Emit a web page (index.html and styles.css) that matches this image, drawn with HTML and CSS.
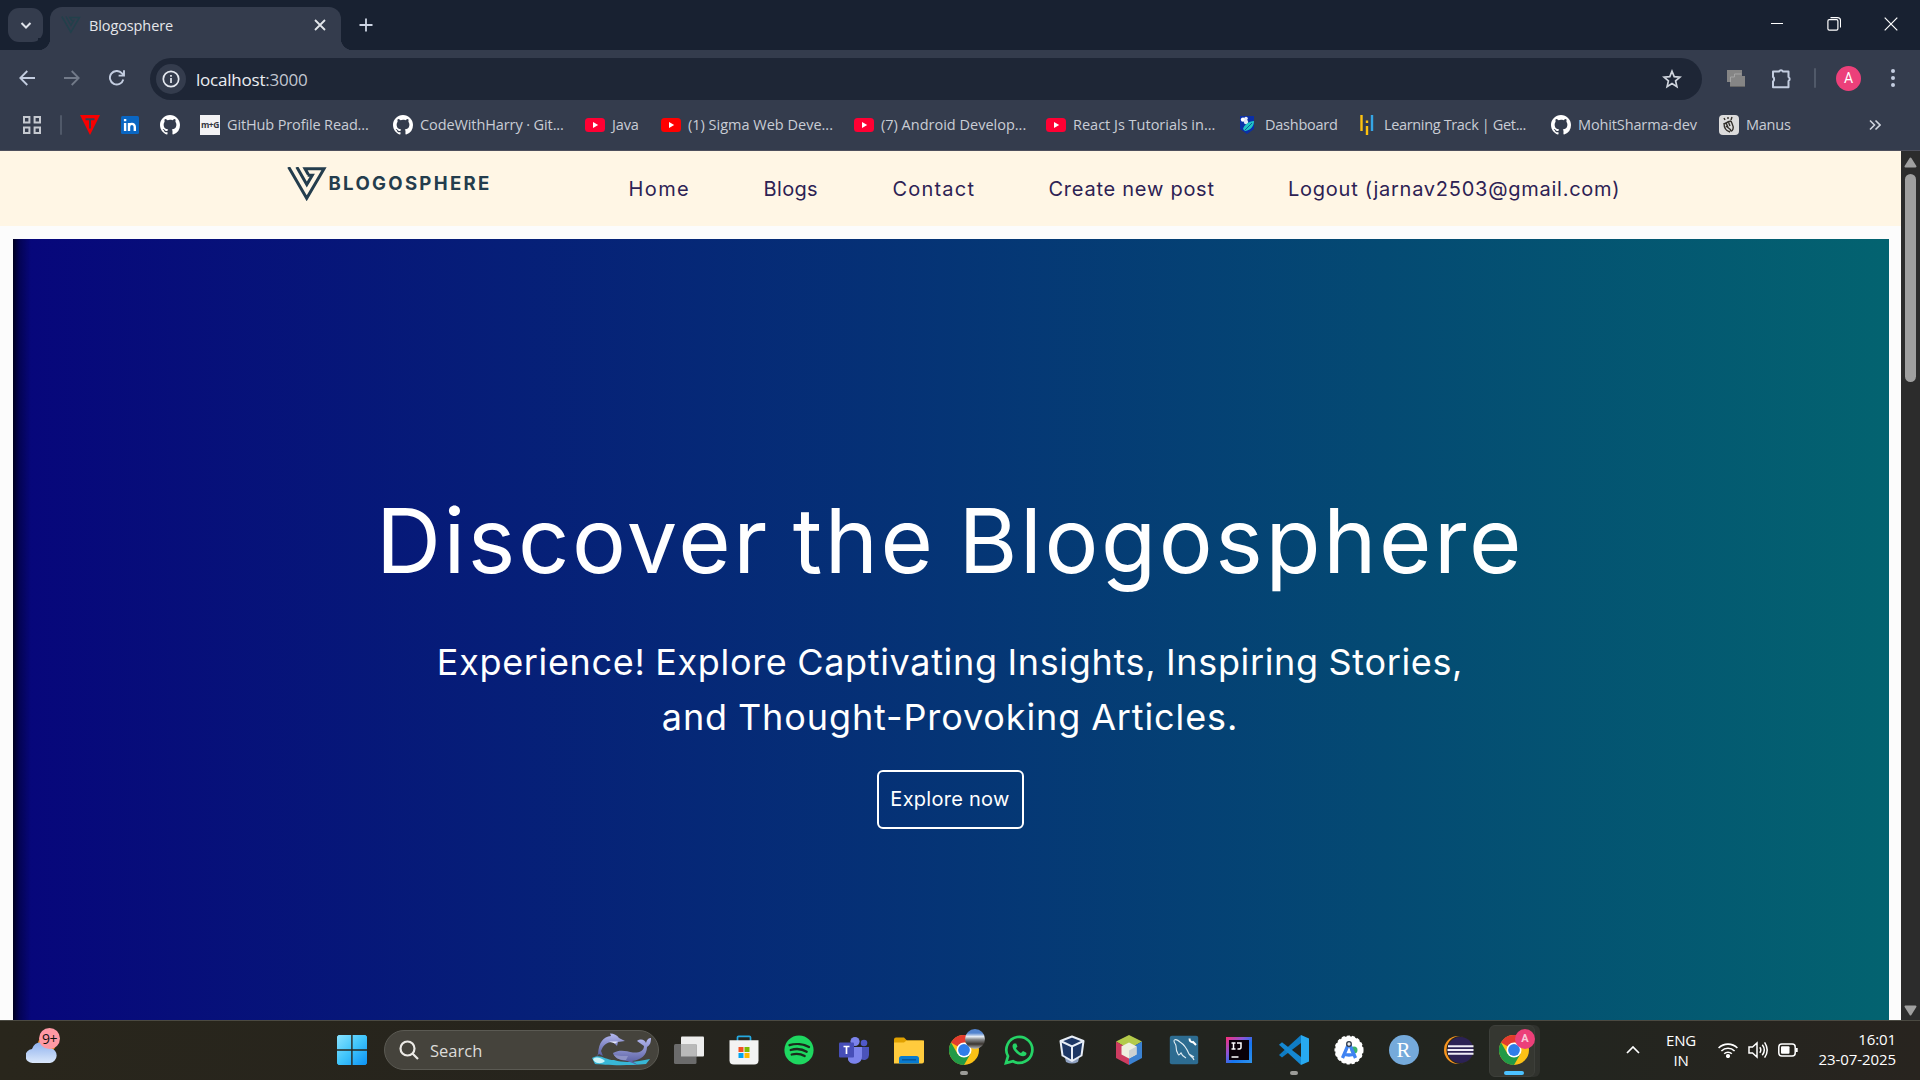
FILE: index.html
```html
<!DOCTYPE html>
<html lang="en">
<head>
<meta charset="utf-8">
<title>Blogosphere</title>
<link rel="stylesheet" href="styles.css">
</head>
<body>
<svg class="defs" width="0" height="0">
  <symbol id="github" viewBox="0 0 16 16"><path d="M8 0C3.58 0 0 3.58 0 8c0 3.54 2.29 6.53 5.47 7.59.4.07.55-.17.55-.38 0-.19-.01-.82-.01-1.49-2.01.37-2.53-.49-2.69-.94-.09-.23-.48-.94-.82-1.13-.28-.15-.68-.52-.01-.53.63-.01 1.08.58 1.23.82.72 1.21 1.87.87 2.33.66.07-.52.28-.87.51-1.07-1.78-.2-3.64-.89-3.64-3.95 0-.87.31-1.59.82-2.15-.08-.2-.36-1.02.08-2.12 0 0 .67-.21 2.2.82A7.6 7.6 0 0 1 8 3.87c.68 0 1.36.09 2 .26 1.53-1.04 2.2-.82 2.2-.82.44 1.1.16 1.92.08 2.12.51.56.82 1.27.82 2.15 0 3.07-1.87 3.75-3.65 3.95.29.25.54.73.54 1.48 0 1.07-.01 1.93-.01 2.2 0 .21.15.46.55.38A8 8 0 0 0 16 8c0-4.42-3.58-8-8-8z" fill="#fff"/></symbol>
  <symbol id="youtube" viewBox="0 0 20 20"><rect y="3" width="20" height="14" rx="3.5" fill="currentColor"/><path d="M8 7l5.2 3L8 13z" fill="#fff"/></symbol>
  <symbol id="vmark" viewBox="0 0 40 34"><path d="M1.6 0L19.7 31.3L37 1.8H18L21.3 7.6M9.8 0L19.8 17.6L25.3 8.2H20.6" fill="none" stroke="currentColor" stroke-width="3"/></symbol>
  <symbol id="chrome" viewBox="0 0 30 30"><circle cx="15" cy="15" r="15" fill="#fbc116"/><path d="M15 15L2 7.5A15 15 0 0 1 28 7.5H15z" fill="#e33b2e"/><path d="M2 7.5A15 15 0 0 0 15 30L21.5 18.7L8.5 18.7z" fill="#219a47"/><circle cx="15" cy="15" r="7.5" fill="#fff"/><circle cx="15" cy="15" r="5.9" fill="#2f7de9"/></symbol>
</svg>

<header class="browser">
  <div class="tabstrip">
    <button class="tab-search"><svg width="12" height="12" viewBox="0 0 12 12"><path d="M1.5 4L6 8.5L10.5 4" fill="none" stroke="#dfe3ea" stroke-width="2"/></svg></button>
    <div class="tab">
      <svg class="favicon" width="20" height="20"><use href="#vmark"/></svg>
      <span class="tab-title">Blogosphere</span>
      <svg width="12" height="12" viewBox="0 0 12 12"><path d="M1 1l10 10M11 1L1 11" stroke="#e3e6eb" stroke-width="1.8"/></svg>
    </div>
    <svg class="newtab" width="14" height="14" viewBox="0 0 14 14"><path d="M7 .5v13M.5 7h13" stroke="#cdd5e4" stroke-width="1.8"/></svg>
    <div class="window-controls">
      <svg width="14" height="14" viewBox="0 0 14 14"><path d="M1 6.5h12" stroke="#fff"/></svg>
      <svg width="14" height="14" viewBox="0 0 14 14" fill="none" stroke="#fff"><rect x=".9" y="2.6" width="10" height="10.5" rx="1.4" stroke-width="1.2"/><path d="M3.5 .6h7a3 3 0 0 1 3 3v7" stroke-width="1.1"/></svg>
      <svg width="14" height="14" viewBox="0 0 14 14"><path d="M.7 .7l12.6 12.6M13.3 .7L.7 13.3" stroke="#fff" stroke-width="1.2"/></svg>
    </div>
  </div>

  <div class="toolbar">
    <svg width="16" height="16" viewBox="0 0 16 16" fill="none" stroke="#c3cde0" stroke-width="1.8"><path d="M16 8H1.5M8.3 1L1.3 8l7 7"/></svg>
    <svg width="16" height="16" viewBox="0 0 16 16" fill="none" stroke="#727a89" stroke-width="1.8"><path d="M0 8h14.5M7.7 1l7 7l-7 7"/></svg>
    <svg width="16" height="16" viewBox="0 0 16 16" fill="none" stroke="#c3cde0" stroke-width="1.9"><path d="M14.3 9.5A6.8 6.8 0 1 1 12.8 3.2L14.5 5M15 .3V5.6H9.6"/></svg>
    <div class="omnibox">
      <span class="site-info"><svg width="18" height="18" viewBox="0 0 18 18" fill="none" stroke="#e4e8ef"><circle cx="9" cy="9" r="7.7" stroke-width="1.7"/><path d="M9 8v5M9 5v1.8" stroke-width="1.7"/></svg></span>
      <span class="url">localhost<i>:3000</i></span>
      <svg width="20" height="20" viewBox="0 0 20 20" fill="none" stroke="#d0d5de" stroke-width="1.7"><path d="M10 2.2l2.2 5.4 5.8.5-4.4 3.8 1.3 5.7L10 14.6l-4.9 3 1.3-5.7L2 8.1l5.8-.5z"/></svg>
    </div>
    <svg class="ext" width="20" height="18" viewBox="0 0 20 18"><path d="M1 1h15v6h3v10H4v-4H1z" fill="#858585"/><path d="M4.5 13V8h4V5h7" fill="none" stroke="#a4a4a4"/><path d="M4 17.5h15" stroke="#666"/></svg>
    <svg width="22" height="22" viewBox="0 0 22 22"><path d="M2 4.500h6a2.300 2.300 0 0 1 4 0H17.500v5.500a2.300 2.300 0 0 1 0 4v6.200H2v-5.700a2.900 2.900 0 0 0 0-4.600z" fill="none" stroke="#c3cde0" stroke-width="2" stroke-linejoin="round"/></svg>
    <span class="divider"></span>
    <span class="avatar">A</span>
    <svg class="menu" width="6" height="20" viewBox="0 0 6 20" fill="#c3cde0"><circle cx="3" cy="3" r="2"/><circle cx="3" cy="10" r="2"/><circle cx="3" cy="17" r="2"/></svg>
  </div>

  <div class="bookmarks">
    <svg width="20" height="20" viewBox="0 0 20 20" fill="none" stroke="#c5c9d0" stroke-width="2"><path d="M2 2h5.4v5.4H2zM12.6 2H18v5.4h-5.4zM2 12.600h5.400V18H2zM12.600 12.600H18V18h-5.400z"/></svg>
    <span class="divider"></span>
    <svg width="20" height="20" viewBox="0 0 20 20"><path d="M0 0h20L10 20z" fill="#f80000"/><path d="M5.500 4.200h9M10 4v9.500" stroke="#384050" stroke-width="2"/></svg>
    <svg width="18" height="18" viewBox="0 0 18 18"><rect width="18" height="18" rx="1.5" fill="#0a66c2"/><path d="M4.1 7v8M4.1 3v2.3M8 15V7M8 11c0-4 5.8-4.3 5.8 0v4" fill="none" stroke="#fff" stroke-width="2.4"/></svg>
    <svg width="20" height="20"><use href="#github"/></svg>
    <a class="bm"><span class="mg">m+G</span><span class="ls-13">GitHub Profile Read...</span></a>
    <a class="bm"><svg><use href="#github"/></svg><span class="ls-10">CodeWithHarry · Git...</span></a>
    <a class="bm yt"><svg><use href="#youtube"/></svg><span class="ls-13">Java</span></a>
    <a class="bm yt red"><svg><use href="#youtube"/></svg><span>(1) Sigma Web Deve...</span></a>
    <a class="bm yt"><svg><use href="#youtube"/></svg><span>(7) Android Develop...</span></a>
    <a class="bm yt"><svg><use href="#youtube"/></svg><span>React Js Tutorials in...</span></a>
    <a class="bm"><svg viewBox="0 0 20 20"><path d="M2 1h14v13l-7 5l-7-5z" fill="#0b2fa6"/><circle cx="5" cy="4.600" r="2.200" fill="#fff"/><circle cx="8" cy="3.500" r="1.800" fill="#e8edf8"/><circle cx="8" cy="7" r="2.200" fill="#dfe6f8"/><path d="M5 14C6 10 11 6 16 6C16 11 13 15 7 16z" fill="#20c3c6"/><path d="M7 15l7-7" stroke="#0b5a9c"/></svg><span class="ls-24">Dashboard</span></a>
    <a class="bm"><svg viewBox="0 0 20 20" stroke-width="2.4"><path d="M4.5 0v16M10 11v9M10 5.5v2.400" stroke="#ffc20e"/><path d="M15 0v16" stroke="#35a5e5"/></svg><span class="ls-35">Learning Track | Get...</span></a>
    <a class="bm"><svg><use href="#github"/></svg><span class="ls-13">MohitSharma-dev</span></a>
    <a class="bm"><svg viewBox="0 0 20 20"><rect width="20" height="20" rx="4" fill="#dcdcdc"/><path d="M5 8c0 4 2 8 6 9M7 8l2 4M9 6l2 5M12 6c1 3 3 5 2 8s-2 2-3 1M5 3l1 2M9 2v2M13 2l-1 3M5 9l4-2l3-1M7 11l5 4" fill="none" stroke="#33302b" stroke-width="1.400"/></svg><span class="ls-24">Manus</span></a>
    <svg class="more" width="12" height="12" viewBox="0 0 12 12" fill="none" stroke="#d0d5de" stroke-width="1.600"><path d="M1 1.500L5.500 6L1 10.500M6.500 1.500L11 6l-4.500 4.500"/></svg>
  </div>
</header>

<main class="viewport">
  <div class="page">
    <nav class="site-nav">
      <a class="logo"><svg width="40" height="34"><use href="#vmark"/></svg><span>BLOGOSPHERE</span></a>
      <a class="home">Home</a>
      <a class="blogs">Blogs</a>
      <a class="contact">Contact</a>
      <a>Create new post</a>
      <a>Logout (jarnav2503@gmail.com)</a>
    </nav>
    <section class="hero">
      <h1>Discover the Blogosphere</h1>
      <p><span>Experience! Explore Captivating Insights, Inspiring Stories,</span><br><span class="second">and Thought-Provoking Articles.</span></p>
      <button class="explore">Explore now</button>
    </section>
  </div>
  <div class="scrollbar">
    <svg width="13" height="11" viewBox="0 0 13 11"><path d="M6.500 1.500L11.500 9.500H1.500z" fill="#a0a0a0" stroke="#a0a0a0" stroke-width="2" stroke-linejoin="round"/></svg>
    <span class="thumb"></span>
    <svg width="13" height="11" viewBox="0 0 13 11"><path d="M6.500 9.500L11.500 1.500H1.500z" fill="#a0a0a0" stroke="#a0a0a0" stroke-width="2" stroke-linejoin="round"/></svg>
  </div>
</main>

<footer class="taskbar">
  <div class="weather">
    <svg width="36" height="38" viewBox="0 0 36 38"><defs><linearGradient id="cl" x2="0" y2="1"><stop stop-color="#8fb2ee"/><stop offset="1" stop-color="#dbe8fb"/></linearGradient></defs><circle cx="21" cy="17" r="9" fill="#f08a1c"/><path d="M7 36a7 7 0 0 1-1-14A10 10 0 0 1 24.500 21A7.600 7.600 0 0 1 24 36z" fill="url(#cl)"/></svg>
    <span class="badge">9+</span>
  </div>
  <svg class="start" width="30" height="30" viewBox="0 0 30 30"><defs><linearGradient id="win" x2="1" y2="1"><stop stop-color="#8ae3ff"/><stop offset=".5" stop-color="#3fc4fb"/><stop offset="1" stop-color="#0c92f5"/></linearGradient></defs><path d="M1.500 0H14.200V14.200H0V1.500zM15.600 0H28.500L30 1.500V14.200H15.600zM0 15.700H14.200V30H1.500L0 28.500zM15.600 15.700H30V28.500L28.500 30H15.600z" fill="url(#win)"/></svg>
  <div class="search">
    <svg width="20" height="20" viewBox="0 0 20 20" fill="none" stroke="#eceae6" stroke-width="2.200"><circle cx="8.500" cy="8.500" r="7"/><path d="M13.500 13.500l5.500 5.500"/></svg>
    <span>Search</span>
    <svg width="60" height="34" viewBox="0 0 60 34"><defs><linearGradient id="wh" x2="0" y2="1"><stop stop-color="#b4b8ef"/><stop offset="1" stop-color="#51579b"/></linearGradient></defs><path d="M1 25C9 20 14 27 23 27C36 31 48 28 59 26L55 31C35 33 12 32 4 31z" fill="#38b7d6"/><path d="M2 26c4-3 8-1 12 2c-3 3-8 3-11 0z" fill="#c9f3f8"/><path d="M7 21C8 9 12 4 20 3L19 .5C23 .5 26 2 28 5L34 8L27 9L26 13L22 9C16 9 12 12 10 18L12 23L8 21L5 24z" fill="url(#wh)"/><path d="M18 8.500l9 0l-3 2z" fill="#e5e8fb"/><path d="M22 20C29 16 35 18 42 19.500C48 20 53 18 53 13L46 8C50 5 54 7 55 10C56 6 58 5 60 5C60 10 59 12 56 14C56 22 50 27 41 28L47 32L36 28C27 27 23 24 22 20z" fill="url(#wh)"/><path d="M23 22c5 1 9 1 14 1l-2 4c-7 0-10-2-12-5z" fill="#8d92c6"/></svg>
  </div>
  <div class="apps">
    <span class="app"><svg viewBox="0 0 30 30"><rect x="7" y="1.500" width="23" height="20" rx="1" fill="#ededed"/><rect y="9" width="22.500" height="20" rx="1.500" fill="#6b6b6b"/><path d="M7 9h15.500v12.500H7z" fill="#b9b9b9"/></svg></span>
    <span class="app"><svg viewBox="0 0 30 30"><path d="M8.500 6V2.500q0-1.200 1.200-1.200h10.600q1.200 0 1.200 1.200V6" fill="none" stroke="#25a9e0" stroke-width="1.700"/><path d="M.5 5.200h29v20q0 4.300-4.300 4.300H4.800Q.5 29.500.5 25.200z" fill="#f3f3f3"/><path d="M9.500 12h5v5h-5z" fill="#f25022"/><path d="M15.500 12h5v5h-5z" fill="#7fba00"/><path d="M9.500 18h5v5h-5z" fill="#00a4ef"/><path d="M15.500 18h5v5h-5z" fill="#ffb900"/></svg></span>
    <span class="app"><svg viewBox="0 0 30 30"><circle cx="15" cy="15" r="14.600" fill="#1ed760"/><path d="M5.500 10.200c6-2 14-1.300 19.500 1.800M6.700 15c5-1.500 11.500-1 16 1.700M7.700 19.500c4.500-1.200 9-.8 13 1.500" fill="none" stroke="#1b2a1d" stroke-width="2.300" stroke-linecap="round"/></svg></span>
    <span class="app"><svg viewBox="0 0 30 30"><circle cx="25" cy="8" r="3.300" fill="#5059c9"/><circle cx="16" cy="6.500" r="4.600" fill="#7b83eb"/><path d="M20 12h10v8a5 5 0 0 1-8 4z" fill="#4b53bc"/><path d="M9 12h14v9a7.500 7.500 0 0 1-14 4z" fill="#7b83eb"/><rect y="7.500" width="15" height="15" rx="1" fill="#464eb8"/><path d="M4.500 11.500h6M7.500 11.500v7.500" stroke="#fff" stroke-width="1.700"/></svg></span>
    <span class="app"><svg viewBox="0 0 30 30"><path d="M0 4.500q0-2 2-2h8l3 3h15q2 0 2 2V12H0z" fill="#e0a100"/><path d="M0 7.500h10l2.500-2H30v21q0 2-2 2H0z" fill="#ffcb3d"/><path d="M5 28.500v-5q0-2.500 2.500-2.500h15q2.500 0 2.500 2.500v5z" fill="#087bd0"/><path d="M8 24.800h14" stroke="#064f8c" stroke-width="1.200"/></svg></span>
    <span class="app running"><svg><use href="#chrome"/></svg><span class="profile photo"></span></span>
    <span class="app"><svg viewBox="0 0 30 30"><path d="M2 28l2-6.800A13 13 0 1 1 9 26.200z" fill="none" stroke="#25d366" stroke-width="2.700"/><path d="M10 8.500c-3 2-1 6 2 9s7 5 9.500 3c1.500-1.500 1-2.500.5-3l-3-1.500-2 2c-2-.7-4-2.700-5-4.700l1.500-1.800-1.300-3z" fill="#25d366"/></svg></span>
    <span class="app vbox"><svg viewBox="0 0 30 30"><path d="M8 23h14l-1 4q-6 3-12 0z" fill="#8ea0c0"/><path d="M15 1.500l11.500 4.500-2 14.500L15 26l-9.500-5.500L3.500 6z" fill="#1d3765" stroke="#e8eef7" stroke-width="2" stroke-linejoin="round"/><path d="M3.500 6L15 11.500L26.500 6M15 11.500V26" fill="none" stroke="#e8eef7" stroke-width="2"/></svg></span>
    <span class="app"><svg viewBox="0 0 30 30"><path d="M15 0l13 6.500L15 14L2 6.500z" fill="#b3ca4a"/><path d="M2 6.500L15 14v16L2 23z" fill="#cd3c60"/><path d="M28 6.500L15 14v16l13-7z" fill="#3b82d2"/><path d="M15 7.500l7.500 3.800v8.200L15 23.500l-7.500-4v-8.200z" fill="#eeefdf"/><path d="M15 15.500l7.500-4v8L15 23.500z" fill="#ccd2d2"/></svg></span>
    <span class="app"><svg viewBox="0 0 30 30"><rect x=".8" y=".8" width="28.400" height="28.400" rx="2" fill="#2d6c91"/><path d="M25 25c-1-3-4-4-5-6c-2-5-4-9-9-12C8 4 5 4 5 6c0 2 2 3 2 5s0 5 2 8c1 2 2 0 3-1c1 3 3 4 5 5M20 19l5 3" fill="none" stroke="#e1edf3" stroke-width="1.100"/><path d="M20.500 3.500c0 3 2 4 3.500 3.500L27 10" fill="none" stroke="#fff" stroke-width="2"/></svg></span>
    <span class="app"><svg viewBox="0 0 30 30"><defs><linearGradient id="ij" x2="1" y2="1"><stop stop-color="#fe2d76"/><stop offset=".35" stop-color="#8a55d8"/><stop offset=".6" stop-color="#1476f2"/><stop offset="1" stop-color="#3094e8"/></linearGradient></defs><rect x="2" y="2" width="26" height="26" fill="url(#ij)"/><rect x="5" y="5" width="20" height="20" fill="#090108"/><path d="M7.500 8h4M9.500 8v6M7.500 14h4M13 8h4v4.500q0 1.800-3.500 1.500M7.500 22h7" fill="none" stroke="#fff" stroke-width="1.500"/></svg></span>
    <span class="app running"><svg viewBox="0 0 30 30"><path d="M22 0L22 8L3 22.500L0 20z" fill="#0f7cc4"/><path d="M22 30L22 22L3 7.300L0 9.800z" fill="#1588d2"/><path d="M22 0l8 3.500v23L22 30z" fill="#27a9f1"/></svg></span>
    <span class="app"><svg viewBox="0 0 30 30"><circle cx="15" cy="15" r="13.800" fill="#fff" stroke="#fff" stroke-width="1.500" stroke-dasharray="3.200 2"/><circle cx="20" cy="15" r="3.500" fill="#3bb36b"/><path d="M15 8l-6.500 15M15 8l6.500 15M9 18.500q6 3 12 0" fill="none" stroke="#3f83f2" stroke-width="3.300"/><circle cx="15" cy="9" r="2.300" fill="#eee" stroke="#2e3948" stroke-width="1.300"/></svg></span>
    <span class="app rstudio">R</span>
    <span class="app"><svg viewBox="0 0 30 30"><circle cx="14" cy="15" r="14" fill="#f7941e"/><circle cx="16.500" cy="15" r="14" fill="#26261f"/><circle cx="16.500" cy="15" r="13" fill="#2c2255"/><path d="M4 11.200h25.500M3.500 15h26M4 18.800h25.500" stroke="#efedf6" stroke-width="1.900"/></svg></span>
    <span class="app active"><svg><use href="#chrome"/></svg><span class="profile">A</span></span>
  </div>
  <div class="tray">
    <svg width="14" height="8" viewBox="0 0 14 8"><path d="M1 7l6-6l6 6" fill="none" stroke="#fff" stroke-width="1.700"/></svg>
    <span class="lang">ENG<br>IN</span>
    <svg class="wifi" width="20" height="16" viewBox="0 0 20 16" fill="none" stroke="#fff" stroke-width="1.600"><path d="M.6 6a13.300 13.300 0 0 1 18.800 0M3.400 9a9.400 9.400 0 0 1 13.200 0M6.200 11.800a5.400 5.400 0 0 1 7.600 0"/><circle cx="10" cy="14" r="1.300" fill="#fff"/></svg>
    <svg width="20" height="18" viewBox="0 0 20 18" fill="none" stroke="#fff" stroke-width="1.500"><path d="M1 6h3.500L9 2v14l-4.500-4H1zM11.800 6.200q2 2.800 0 5.600M14.300 3.800q4 5.200 0 10.400M16.600 1.300q5.200 7.700 0 15.400"/></svg>
    <svg class="battery" width="20" height="14" viewBox="0 0 20 14"><rect x=".8" y="1" width="16.400" height="12" rx="3" fill="none" stroke="#fff" stroke-width="1.500"/><rect x="3" y="3.200" width="8.500" height="7.600" rx="1" fill="#fff"/><path d="M18.700 5v4" stroke="#fff" stroke-width="2"/></svg>
    <span class="clock">16:01<br>23-07-2025</span>
  </div>
</footer>
</body>
</html>
```
FILE: styles.css
```css
* { box-sizing: border-box; }
body { margin: 0; width: 1920px; height: 1080px; overflow: hidden; display: flex; flex-direction: column; font-family: "Open Sans", sans-serif; background: #fcfcfc; }
button { font: inherit; padding: 0; border: 0; }
svg { display: block; flex: none; }
.defs { position: absolute; }

/* browser frame */
.browser { height: 151px; background: #343c4d; border-bottom: 1px solid #4d4f5c; flex: none; }
.tabstrip { height: 50px; background: #182131; display: flex; align-items: flex-start; padding: 7px 12px 0 8px; }
.tab-search { width: 35px; height: 34px; margin: 1px 7px 0 0; border-radius: 11px; background: #343c4d; display: grid; place-items: center; }
.tab { position: relative; width: 291px; height: 43px; border-radius: 12px 12px 0 0; background: #343c4d; display: flex; align-items: center; padding: 0 15px 7px 11px; }
.tab::before, .tab::after { content: ""; position: absolute; bottom: 0; width: 12px; height: 12px; }
.tab::before { left: -12px; background: radial-gradient(circle at 0 0, #182131 12px, #343c4d 12.5px); }
.tab::after { right: -12px; background: radial-gradient(circle at 100% 0, #182131 12px, #343c4d 12.5px); }
.favicon { color: #22404b; }
.tab-title { flex: 1; padding-left: 8px; color: #e4e6ea; font-size: 14.5px; letter-spacing: -.11px; }
.newtab { margin: 11px 0 0 18px; }
.window-controls { margin-left: auto; padding: 10px 10px 0 0; display: flex; gap: 43px; }

.toolbar { height: 56px; display: flex; align-items: center; padding: 0 24px 0 19px; }
.toolbar > svg:nth-child(-n+2) { margin-right: 29px; }
.omnibox { flex: none; width: 1552px; height: 42px; margin: 2px 24px 0 25px; border-radius: 21px; background: #1e2636; display: flex; align-items: center; padding: 0 20px 0 6px; }
.site-info { width: 30px; height: 30px; border-radius: 50%; background: #343c4d; display: grid; place-items: center; }
.url { flex: 1; padding-left: 10px; color: #eceef2; font-size: 17px; letter-spacing: -.22px; }
.url i { font-style: normal; color: #c2c7d1; }
.ext { margin-right: 25px; }
.divider { width: 2px; height: 20px; border-radius: 1px; background: #505969; }
.toolbar .divider { margin: 0 20px 0 21px; }
.avatar { width: 25px; height: 25px; border-radius: 50%; background: #ec407a; color: #fff; font: 14px/25px Roboto, sans-serif; text-align: center; }
.menu { margin-left: auto; }

.bookmarks { height: 38px; display: grid; align-items: center; padding-left: 22px; grid-template-columns: 38px 20px 41px 39px 40px 193px 192px 76px 193px 192px 192px 119px 194px 168px 150px 12px; }
.bm { display: flex; align-items: center; gap: 8px; color: #c9cdd5; font-size: 14.5px; white-space: nowrap; }
.bm > span:last-child { margin: -2px 0 0 -1px; }
.bm svg { width: 20px; height: 20px; }
.yt { color: #ff0033; }
.red { color: #ff0000; }
.yt span { color: #c9cdd5; }
.mg { width: 20px; height: 20px; background: #f2f2f4; color: #33353f; font: 700 8.5px/20px "Open Sans", sans-serif; text-align: center; letter-spacing: -.4px; }
.ls-10 { letter-spacing: -.1px; }
.ls-13 { letter-spacing: -.13px; }
.ls-24 { letter-spacing: -.24px; }
.ls-35 { letter-spacing: -.35px; }

/* page */
.viewport { flex: 1; display: flex; min-height: 0; }
.page { width: 1901px; background: #fcfcfc; font-family: Inter, sans-serif; }
.site-nav { height: 75px; background: #fff6e5; display: grid; grid-template-columns: 342px 135px 129px 156px 239.5px auto; align-items: center; padding-left: 286.5px; color: #2d2254; font-size: 20px; letter-spacing: .75px; white-space: nowrap; }
.logo { display: flex; align-items: center; height: 34px; gap: 2px; margin-bottom: 9px; color: #243d4d; }
.logo span { font-size: 18.6px; font-weight: 700; letter-spacing: 2.3px; line-height: 30px; margin-bottom: 2px; }
.home { letter-spacing: 1.4px; }
.blogs { letter-spacing: .35px; }
.contact { letter-spacing: 1.2px; }
.hero { height: 781px; margin: 13px 12px 0 13px; padding: 234px 2px 0 0; display: flex; flex-direction: column; align-items: center; color: #fff; text-align: center; background: linear-gradient(90deg, #000020 0, rgba(0, 0, 50, .55) 6px, rgba(5, 5, 110, 0) 18px), linear-gradient(90deg, #07067b, #036370); }
.hero h1 { margin: 0 0 27px; font-weight: 400; font-size: 90px; line-height: 135px; letter-spacing: 2.6px; word-spacing: -5px; white-space: nowrap; }
.hero p { margin: 0 0 25px; font-size: 36px; line-height: 55px; letter-spacing: .66px; word-spacing: -1px; white-space: nowrap; }
.second { letter-spacing: .88px; }
.explore { width: 147px; height: 59px; padding-bottom: 2px; border: 2px solid #fff; border-radius: 6px; background: transparent; color: #fff; font-size: 20px; letter-spacing: .27px; }
.scrollbar { width: 19px; background: #2c2c2c; display: flex; flex-direction: column; align-items: center; padding: 6px 0 4px; }
.thumb { width: 11px; height: 208px; margin: 6px 0 auto; border-radius: 6px; background: #9f9f9f; }

/* desktop taskbar */
.taskbar { height: 60px; flex: none; padding-bottom: 1px; border-top: 1px solid #4b4a42; background: linear-gradient(90deg, #29261c, #26241d 30%, #22241f 60%, #22251f 80%, #28241f); display: flex; align-items: center; color: #fff; }
.weather { position: relative; width: 337px; height: 58px; padding: 6px 0 0 26px; }
.badge { position: absolute; left: 39px; top: 7px; width: 21px; height: 21px; border-radius: 50%; background: #ff99a4; color: #111; font-size: 14px; line-height: 21px; text-align: center; letter-spacing: -.5px; }
.search { width: 275px; height: 40px; margin-left: 17px; border: 1px solid #5b5a53; border-radius: 20px; background: #45433c; display: flex; align-items: center; padding: 0 7px 0 14px; }
.search span { flex: 1; padding-left: 11px; font-size: 16.5px; color: #dddcd9; }
.apps { display: grid; grid-template-columns: repeat(16, 55px); margin-left: 2px; }
.app { position: relative; height: 50px; display: grid; place-items: center; }
.app > svg { width: 30px; height: 30px; }
.vbox > svg { margin-right: 4px; }
.running::after, .active::after { content: ""; position: absolute; bottom: 0; left: 23.5px; width: 8px; height: 4px; border-radius: 2px; background: #9c9c98; }
.active::after { left: 17.5px; width: 20px; background: #4cc2ff; }
.active::before { content: ""; position: absolute; left: 3px; top: 0; width: 44px; height: 50px; border-radius: 6px; border: 1px solid #3d3f3a; background: #353731; box-shadow: 5px 0 0 #30322d; }
.active > svg { position: relative; }
.profile { position: absolute; left: 29px; top: 4px; width: 20px; height: 20px; border-radius: 50%; background: #ec3f79; color: #f7c9d8; font: 700 11px/20px Roboto, sans-serif; text-align: center; }
.photo { background: linear-gradient(#5284cf 0 20%, #e7edf4 38%, #8b8e91 52%, #39342f 75%, #b9bcc0); }
.rstudio { justify-self: center; align-self: center; width: 30px; height: 30px; border-radius: 50%; background: #75aadb; font: 21px/30px "Liberation Serif", serif; }
.tray { flex: 1; display: flex; align-items: center; padding-left: 85px; font-size: 15px; line-height: 20px; }
.lang { width: 48px; margin: -1px 13px 0 17px; text-align: center; letter-spacing: -.2px; }
.tray svg + svg { margin-left: 10px; }
.clock { margin: -3px 24px 0 auto; text-align: right; letter-spacing: -.08px; }
```
